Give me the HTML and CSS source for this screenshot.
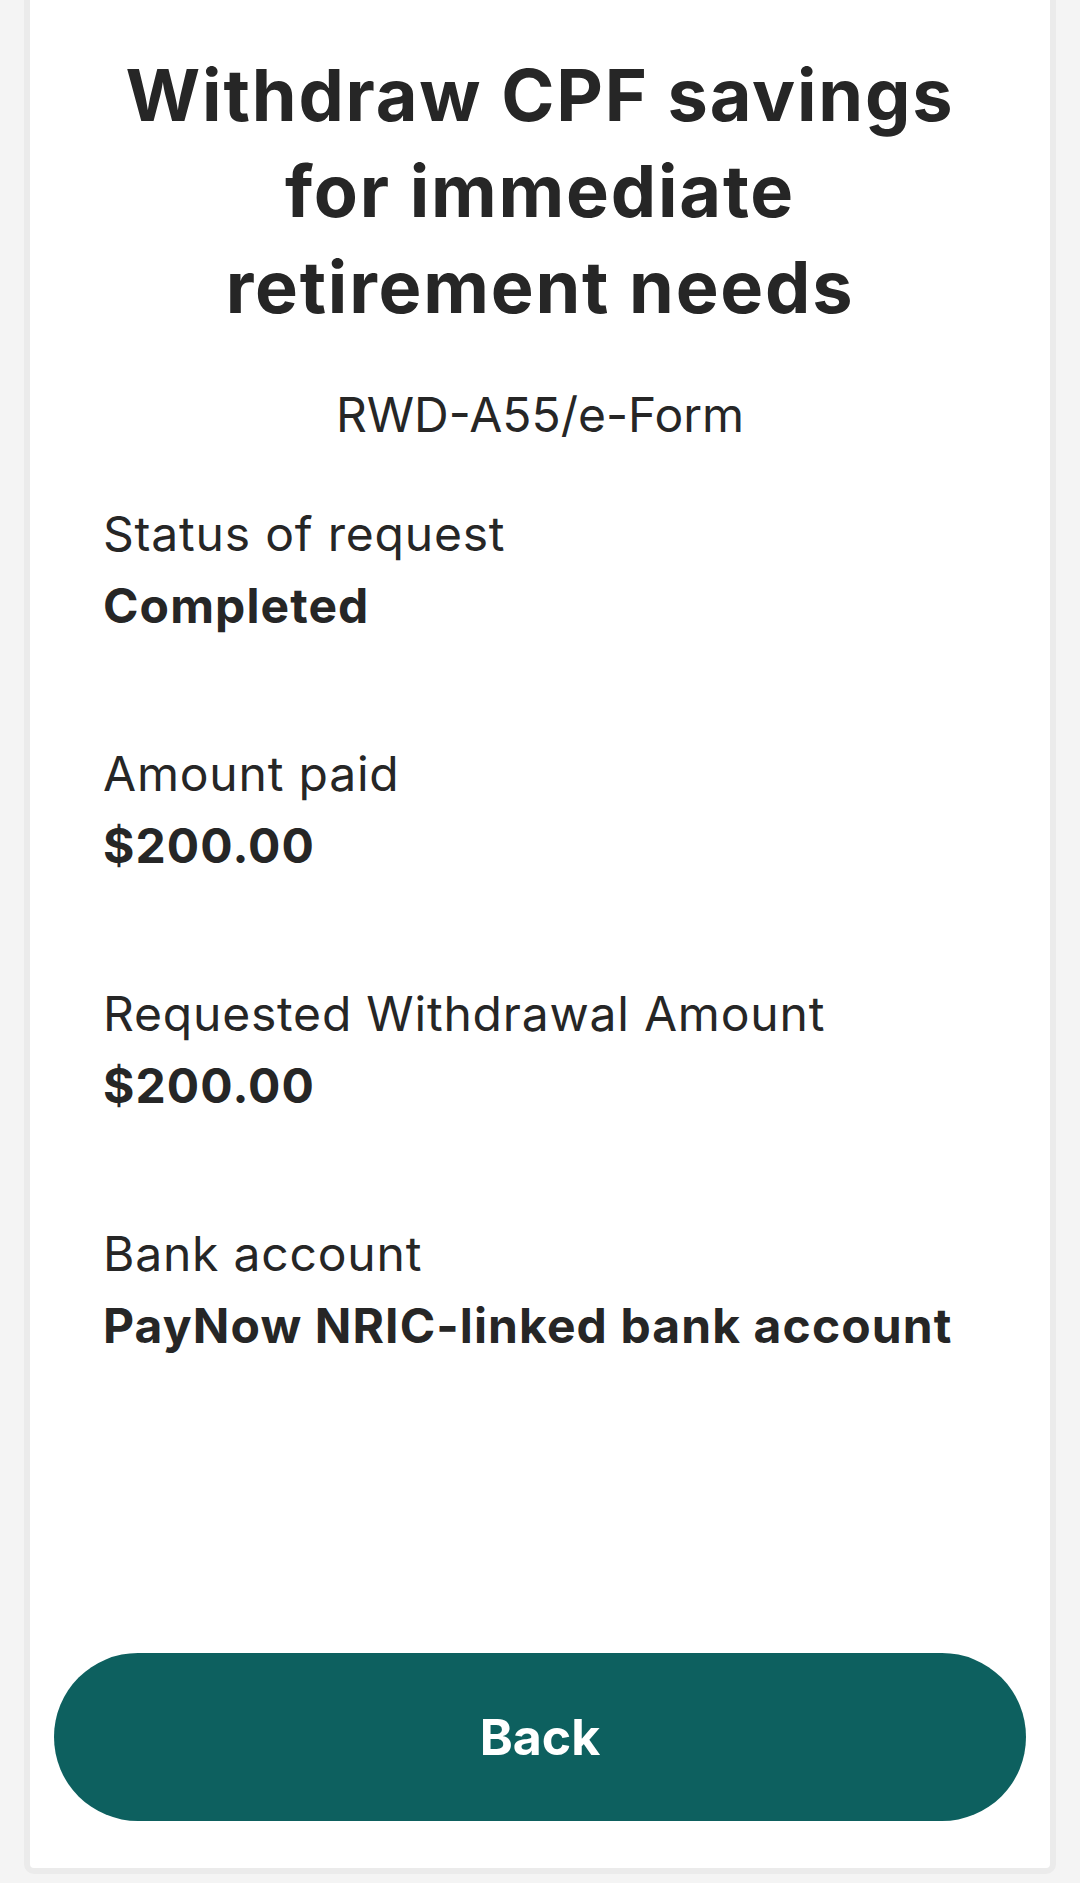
FILE: index.html
```html
<!DOCTYPE html>
<html lang="en">
<head>
    <meta charset="UTF-8">
    <title>Withdraw CPF savings</title>
    <link rel="stylesheet" href="styles.css">
</head>
<body>

    <div class="card">
        <h1 class="title">Withdraw CPF savings for immediate retirement needs</h1>
        <p class="form-code">RWD-A55/e-Form</p>

        <dl class="details">
            <div class="item">
                <dt>Status of request</dt>
                <dd>Completed</dd>
            </div>
            <div class="item">
                <dt>Amount paid</dt>
                <dd>$200.00</dd>
            </div>
            <div class="item">
                <dt>Requested Withdrawal Amount</dt>
                <dd>$200.00</dd>
            </div>
            <div class="item">
                <dt>Bank account</dt>
                <dd>PayNow NRIC-linked bank account</dd>
            </div>
        </dl>

        <button class="back-btn">Back</button>
    </div>

</body>
</html>
```
FILE: styles.css
```css
body {
    margin: 0;
    background: #f4f4f4;
    font-family: Inter, "Noto Sans", sans-serif;
    color: #262626;
}
.card {
    width: 1032px;
    min-height: 1874px;
    margin: 0 auto;
    box-sizing: border-box;
    background: #fff;
    border: 6px solid #ebebeb;
    border-top: 0;
    border-radius: 0 0 10px 10px;
    padding: 47px 24px 47px;
    display: flex;
    flex-direction: column;
}
.title {
    margin: 0;
    padding: 0 50px;
    font-size: 72px;
    line-height: 96px;
    font-weight: 700;
    letter-spacing: 1.8px;
    text-align: center;
}
.form-code {
    margin: 44px 0 0;
    font-size: 48px;
    line-height: 72px;
    text-align: center;
}
.details {
    margin: 47px 0 0;
    padding-left: 49px;
    display: flex;
    flex-direction: column;
    gap: 96px;
}
.item dt, .item dd {
    margin: 0;
    font-size: 48px;
    line-height: 72px;
}
.item dt {
    letter-spacing: 0.8px;
}
.item dd {
    font-weight: 700;
    letter-spacing: 1.1px;
}
.back-btn {
    margin-top: auto;
    width: 100%;
    height: 168px;
    border: none;
    border-radius: 84px;
    background: #0d605f;
    color: #fff;
    font-family: inherit;
    font-size: 50px;
    font-weight: 700;
}
```
